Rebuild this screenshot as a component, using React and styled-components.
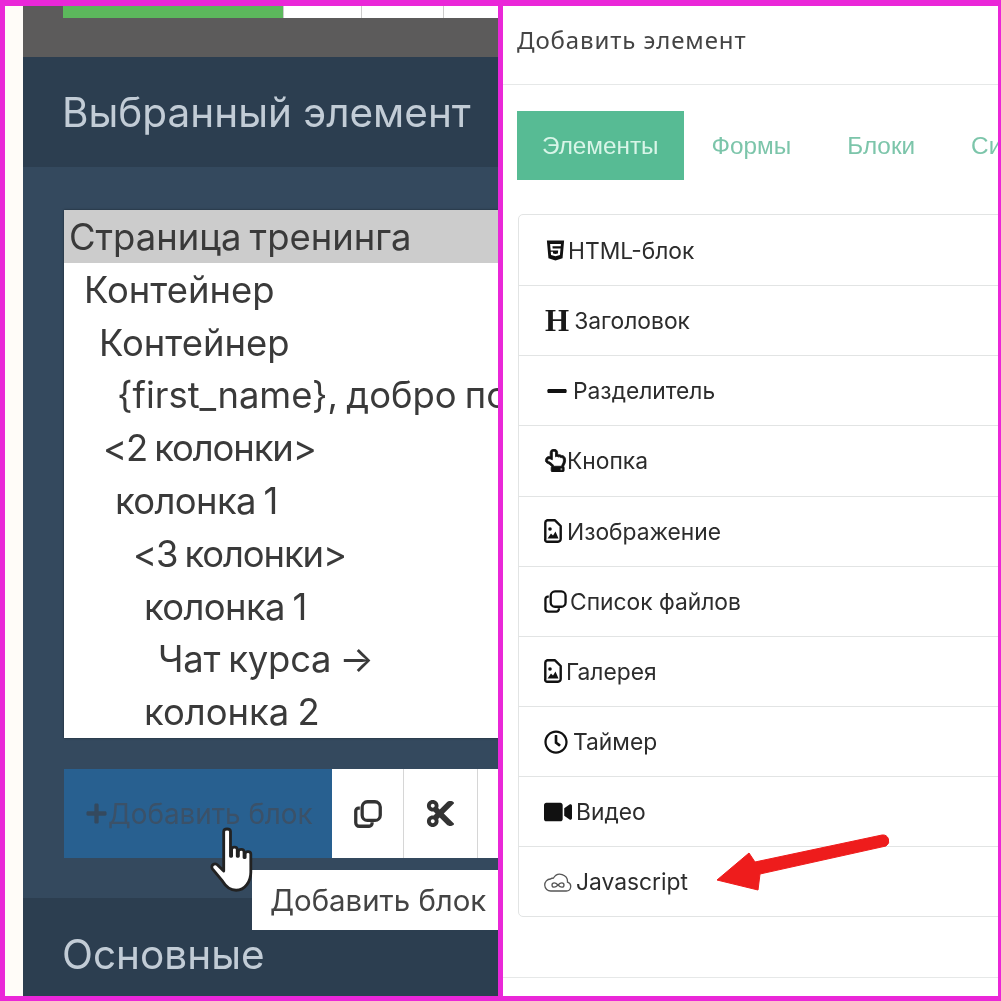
import React from "react"
import styled, { createGlobalStyle } from "styled-components"
import { FaHtml5, FaMinus, FaRegHandPointUp, FaRegClock, FaVideo, FaCut, FaPlus } from "react-icons/fa"

const GlobalStyle = createGlobalStyle`
  html, body { margin: 0; padding: 0; background: #ea27d8; }
`

const Page = styled.div`
  position: relative;
  width: 1001px;
  height: 1001px;
  overflow: hidden;
  box-sizing: border-box;
  padding: 6px 3px 5px 5px;
  display: flex;
  gap: 5px;
  background: #ea27d8;
`

const LeftPanel = styled.section`
  position: relative;
  width: 493px;
  flex: none;
  display: flex;
  overflow: hidden;
  background: #fffcf8;
  padding-left: 18px;
  box-sizing: border-box;
  font-family: Inter, "Liberation Sans", sans-serif;
  filter: blur(0.6px);
`

const Editor = styled.div`
  flex: 1;
  min-width: 0;
  display: flex;
  flex-direction: column;
  background: #34495e;
`

const TopStrip = styled.div`
  height: 51px;
  flex: none;
  background: #5c5b5b;
  padding-left: 40px;
`

const TopButtons = styled.div`
  display: flex;
  height: 12px;
  background: #fff;
`

const TopButton = styled.div`
  width: ${(p) => p.$width}px;
  flex: none;
  background: ${(p) => (p.$active ? "#5cb85c" : "#fff")};
  border-right: 1px solid #ccc;
  box-sizing: border-box;
`

const SectionHead = styled.h2`
  margin: 0;
  flex: none;
  height: ${(p) => p.$height}px;
  background: #2c3e50;
  color: #c2ccd6;
  font-size: 40.5px;
  font-weight: 400;
  display: flex;
  align-items: ${(p) => (p.$low ? "flex-end" : "center")};
  padding: 0 0 ${(p) => (p.$low ? "17px" : "0")} 39px;
  box-sizing: border-box;
  white-space: nowrap;
`

const EditorBody = styled.div`
  position: relative;
  flex: 1;
  padding: 43px 0 0 41px;
  min-height: 0;
`

const Tree = styled.div`
  height: 528px;
  background: #fff;
  overflow: hidden;
  box-shadow: 0 0 2px rgba(0, 0, 0, 0.5);
`

const TreeRow = styled.div`
  height: 52.8px;
  line-height: 54px;
  font-size: 36.4px;
  word-spacing: -2px;
  letter-spacing: ${(p) => p.$tight || 0}px;
  color: #3a3a3a;
  white-space: nowrap;
  padding-left: ${(p) => p.$indent}px;
  background: ${(p) => (p.$selected ? "#cccccc" : "transparent")};
`

const Toolbar = styled.div`
  display: flex;
  height: 89px;
  margin-top: 31px;
`

const AddButton = styled.div`
  width: 268px;
  flex: none;
  display: flex;
  align-items: center;
  padding-left: 21px;
  box-sizing: border-box;
  background: #286090;
  color: #3b5168;
  font-size: 27.8px;
  white-space: nowrap;
  svg {
    color: #34495e;
    flex: none;
  }
`

const ToolButton = styled.div`
  width: ${(p) => p.$width}px;
  flex: none;
  display: flex;
  align-items: center;
  justify-content: center;
  background: #fff;
  color: #333;
  font-size: 31px;
  border-right: 1px solid #d6d6d6;
  box-sizing: border-box;
`

const ToolFill = styled.div`
  flex: 1;
  background: #fff;
`

const Tooltip = styled.div`
  position: absolute;
  left: 229px;
  top: 703px;
  width: 260px;
  height: 60px;
  background: #fff;
  color: #444;
  font-size: 29.4px;
  line-height: 62px;
  padding-left: 18px;
  box-sizing: border-box;
  white-space: nowrap;
`

const HandCursor = styled.svg`
  position: absolute;
  left: 186px;
  top: 660px;
  width: 52px;
  height: 70px;
`

const RightPanel = styled.section`
  flex: 1;
  min-width: 0;
  background: #fff;
  overflow: hidden;
  font-family: Inter, "Noto Sans", sans-serif;
  filter: blur(0.5px);
`

const ModalHeader = styled.header`
  height: 79px;
  display: flex;
  align-items: center;
  padding: 0 0 12px 14px;
  box-sizing: border-box;
  border-bottom: 1px solid #e6e8e8;
  font-family: "Noto Sans", sans-serif;
  font-size: 24px;
  letter-spacing: 0.9px;
  color: #444;
`

const Tabs = styled.nav`
  display: flex;
  margin: 26px 0 0 14px;
  height: 69px;
  white-space: nowrap;
`

const Tab = styled.div`
  flex: none;
  display: flex;
  align-items: center;
  padding: 0 ${(p) => (p.$active ? "25px" : "28px")};
  background: ${(p) => (p.$active ? "#57bb94" : "transparent")};
  color: ${(p) => (p.$active ? "#d8f5e8" : "#7cc5aa")};
  font-size: 24.3px;
  font-family: "Liberation Sans", Arial, sans-serif;
`

const List = styled.div`
  margin: 34px -8px 0 15px;
  border: 1px solid #e2e4e4;
  border-radius: 5px;
`

const ListRow = styled.div`
  height: 70.15px;
  display: flex;
  align-items: center;
  padding-left: 25px;
  box-sizing: border-box;
  border-top: ${(p) => (p.$first ? "0" : "1px solid #e2e4e4")};
  color: #2c2c2c;
  font-size: 22.8px;
  white-space: nowrap;
`

const RowIcon = styled.span`
  display: inline-flex;
  align-items: center;
  justify-content: center;
  margin: 0 ${(p) => p.$gap || 0}px 0 ${(p) => p.$left || 0}px;
  color: #111;
  font-size: ${(p) => p.$size || 22}px;
`

const SerifH = styled.span`
  font-family: "Liberation Serif", serif;
  font-weight: 700;
  font-size: 31px;
  line-height: 1;
  color: #1a1a1a;
  margin: 0 5px 0 1px;
`

const BottomLine = styled.div`
  margin-top: 60px;
  border-top: 1px solid #e6e8e8;
`

const ArrowMark = styled.svg`
  position: absolute;
  left: 710px;
  top: 825px;
  width: 190px;
  height: 75px;
`

const CloudInfinity = () => (
  <svg width="28" height="24" viewBox="0 0 28 24" fill="none" stroke="#555" strokeWidth="1.3">
    <path d="M7 21h15a4.500 4.500 0 0 0 1.500-8.800 7.500 7.500 0 0 0-14-4.200 5.500 5.500 0 0 0-3 1 6 6 0 0 0 .5 12z" />
    <path d="M14 15c-1.500-1.600-2.500-2.200-3.800-2.200a2.200 2.200 0 0 0 0 4.400c1.300 0 2.300-.6 3.800-2.200zm0 0c1.500-1.600 2.500-2.200 3.800-2.200a2.200 2.200 0 0 1 0 4.400c-1.300 0-2.300-.6-3.800-2.200z" />
  </svg>
)

const FileImage = () => (
  <svg width="18" height="24" viewBox="0 0 18 24">
    <path d="M3 1.300h8l5.700 5.700V20a2.700 2.700 0 0 1-2.700 2.700H3A2 2 0 0 1 1.300 20V4A2.700 2.700 0 0 1 3 1.300z" fill="#fff" stroke="#111" strokeWidth="2.400" strokeLinejoin="round" />
    <circle cx="6" cy="10" r="1.800" fill="#111" />
    <path d="M3.500 19.500l3.500-5 2 2 2.500-4 3 7z" fill="#111" />
  </svg>
)

const CopyIcon = ({ size, weight = 2.4 }) => (
  <svg width={size} height={size} viewBox="0 0 24 24" fill="none" stroke="currentColor" strokeWidth={weight} strokeLinejoin="round">
    <path d="M5 7H4a2.500 2.500 0 0 0-2.500 2.500v10A3 3 0 0 0 4.500 22.500H13a2.500 2.500 0 0 0 2.500-2.500v-1" />
    <rect x="7" y="1.500" width="15.500" height="16" rx="4.500" />
  </svg>
)

const treeRows = [
  { text: "Страница тренинга", indent: 5, selected: true },
  { text: "Контейнер", indent: 20 },
  { text: "Контейнер", indent: 35 },
  { text: "{first_name}, добро пожаловать", indent: 53 },
  { text: "<2 колонки>", indent: 39, tight: -1.1 },
  { text: "колонка 1", indent: 51, tight: -0.6 },
  { text: "<3 колонки>", indent: 69, tight: -1.1 },
  { text: "колонка 1", indent: 80, tight: -0.6 },
  { text: "Чат курса →", indent: 94, tight: -0.2 },
  { text: "колонка 2", indent: 80 },
]

const elements = [
  { text: "HTML-блок", icon: <RowIcon $size={23} $gap={1}><FaHtml5 /></RowIcon> },
  { text: "Заголовок", icon: <SerifH>H</SerifH> },
  { text: "Разделитель", icon: <RowIcon $size={22} $gap={5} $left={2}><FaMinus /></RowIcon> },
  { text: "Кнопка", icon: <RowIcon $size={23} $gap={0}><FaRegHandPointUp stroke="currentColor" strokeWidth={18} /></RowIcon> },
  { text: "Изображение", icon: <RowIcon $gap={5}><FileImage /></RowIcon> },
  { text: "Список файлов", icon: <RowIcon $gap={3}><CopyIcon size={23} /></RowIcon> },
  { text: "Галерея", icon: <RowIcon $gap={4}><FileImage /></RowIcon> },
  { text: "Таймер", icon: <RowIcon $size={24} $gap={5}><FaRegClock /></RowIcon> },
  { text: "Видео", icon: <RowIcon $size={28} $gap={4}><FaVideo /></RowIcon> },
  { text: "Javascript", icon: <RowIcon $gap={4}><CloudInfinity /></RowIcon> },
]

const App = () => (
  <Page>
    <GlobalStyle />
    <LeftPanel>
      <Editor>
        <TopStrip>
          <TopButtons>
            <TopButton $width={221} $active />
            <TopButton $width={78} />
            <TopButton $width={82} />
          </TopButtons>
        </TopStrip>
        <SectionHead $height={110}>Выбранный элемент</SectionHead>
        <EditorBody>
          <Tree>
            {treeRows.map((row, i) => (
              <TreeRow key={i} $indent={row.indent} $selected={row.selected} $tight={row.tight}>
                {row.text}
              </TreeRow>
            ))}
          </Tree>
          <Toolbar>
            <AddButton>
              <FaPlus size={23} />
              Добавить блок
            </AddButton>
            <ToolButton $width={72}>
              <CopyIcon size={28} weight={2.8} />
            </ToolButton>
            <ToolButton $width={74}>
              <FaCut />
            </ToolButton>
            <ToolFill />
          </Toolbar>
          <Tooltip>Добавить блок</Tooltip>
          <HandCursor viewBox="0 0 46 62">
            <path
              d="M13 4c0-3 6-3 6 0v22l1 0v-6c0-3 5-3 5 0v6h1v-4c0-3 5-3 5 0v5h1v-3c0-3 5-3 5 0v16c0 8-5 16-13 16-6 0-9-3-12-8L3 37c-2-3 2-6 5-3l5 5z"
              fill="#fff"
              stroke="#222"
              strokeWidth="2.500"
              strokeLinejoin="round"
            />
          </HandCursor>
        </EditorBody>
        <SectionHead $height={98} $low>
          Основные
        </SectionHead>
      </Editor>
    </LeftPanel>
    <RightPanel>
      <ModalHeader>Добавить элемент</ModalHeader>
      <Tabs>
        <Tab $active>Элементы</Tab>
        <Tab>Формы</Tab>
        <Tab>Блоки</Tab>
        <Tab>Системные</Tab>
      </Tabs>
      <List>
        {elements.map((el, i) => (
          <ListRow key={el.text} $first={i === 0}>
            {el.icon}
            {el.text}
          </ListRow>
        ))}
      </List>
      <BottomLine />
    </RightPanel>
    <ArrowMark viewBox="0 0 190 75">
      <path
        d="M7 55 L39 28 L45 37 L172 10 a6 6 0 0 1 4 11 L50 49 L48 65 Z"
        fill="#ee1c1c"
        stroke="#ee1c1c"
        strokeWidth="1"
        strokeLinejoin="round"
      />
    </ArrowMark>
  </Page>
)

export default App
